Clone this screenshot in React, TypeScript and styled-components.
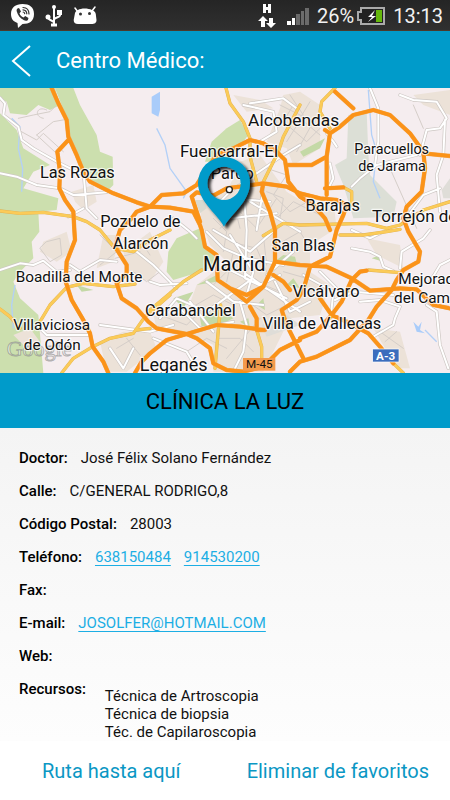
import React from "react";
import styled, { createGlobalStyle } from "styled-components";

const blue = "#009bca";

const GlobalStyle = createGlobalStyle`
  * { box-sizing: border-box; }
  body { margin: 0; background: #fff; }
  body, button { font-family: Roboto, "Noto Sans", sans-serif; }
`;

const Screen = styled.div`
  min-height: 100vh;
  display: flex;
  flex-direction: column;
  color: #111;
`;

const StatusBar = styled.div`
  display: flex;
  align-items: center;
  justify-content: space-between;
  height: 31px;
  padding: 1px 7px 0 10px;
  background: linear-gradient(#252525, #303030);
  border-bottom: 1px solid #4a3a2c;
  color: #f2f2f2;
  font-size: 20px;
`;

const StatusGroup = styled.div<{ $gap: number }>`
  display: flex;
  align-items: center;
  gap: ${(p) => p.$gap}px;
`;

const Level = styled.span`
  display: flex;
  align-items: center;
  gap: 3px;
`;

const Header = styled.header`
  display: flex;
  align-items: center;
  gap: 22px;
  height: 57px;
  padding: 2px 10px 0;
  background: ${blue};
  color: #fff;
`;

const BackButton = styled.button`
  display: flex;
  padding: 0;
  border: 0;
  background: none;
  color: inherit;
`;

const HeaderTitle = styled.h1`
  margin: 0;
  font-size: 22px;
  line-height: 28px;
  font-weight: 400;
`;

const MapArea = styled.svg`
  display: block;
  width: 100%;
  height: 285px;
  background: #f5edef;
`;

const Road = styled.path<{ $kind: "major" | "medium" | "minor" | "track" }>`
  fill: none;
  stroke-linejoin: round;
  stroke-linecap: round;
  stroke: ${(p) => ({ major: "#fb9318", medium: "#fbcb58", minor: "#fff", track: "#d5cec9" })[p.$kind]};
  stroke-width: ${(p) => ({ major: 11, medium: 8, minor: 6, track: 3 })[p.$kind]};
`;

const RoadCasing = styled(Road)`
  stroke: ${(p) => (p.$kind === "major" ? "#f3a650" : p.$kind === "medium" ? "#dfb053" : "#cdc7c3")};
  stroke-width: ${(p) => (p.$kind === "major" ? 13 : 10)};
`;

const Place = styled.text<{ $size: number }>`
  font-family: Roboto, sans-serif;
  font-size: ${(p) => p.$size}px;
  fill: #111;
  stroke: #fff;
  stroke-width: 7px;
  stroke-opacity: 0.75;
  stroke-linejoin: round;
  paint-order: stroke;
`;

const ClinicName = styled.h2`
  display: flex;
  align-items: center;
  justify-content: center;
  height: 55px;
  margin: 0;
  padding-top: 2px;
  background: ${blue};
  color: #000;
  font-size: 22px;
  font-weight: 400;
`;

const Details = styled.dl`
  flex: 1;
  margin: 0;
  padding: 14px 19px 0;
  background: linear-gradient(#f4f4f4, #fdfdfd);
  font-size: 15px;
`;

const Row = styled.div`
  display: flex;
  gap: 13px;
  min-height: 33px;
  line-height: 33px;
`;

const Label = styled.dt`
  font-weight: 500;
  color: #000;
`;

const Value = styled.dd`
  display: flex;
  gap: 13px;
  margin: 0;
`;

const Link = styled.a`
  color: #1caee4;
  text-underline-offset: 3px;
  text-decoration-thickness: 1px;
`;

const Resources = styled.ul`
  margin: 0;
  padding: 14px 0 0 6px;
  list-style: none;
  line-height: 18px;
`;

const Actions = styled.footer`
  display: flex;
  align-items: center;
  justify-content: space-between;
  height: 59px;
  padding: 0 21px 0 42px;
  background: #fff;
`;

const Action = styled.button`
  padding: 0;
  border: 0;
  background: none;
  color: #0b97c4;
  font-size: 20px;
  line-height: 28px;
`;

const terrain: [string, string][] = [
  ["#ccdfae", "M0 9H165L180 60 150 75 115 60 80 90 30 85 20 50 0 40Z"],
  ["#ccdfae", "M0 85L50 135 70 190 150 240 100 260 70 310 175 340 170 375 115 380 118 440 95 470 100 520 60 560 40 590 60 640 115 690 130 864H0Z"],
  ["#ccdfae", "M165 9H220L240 60 290 150 300 200 338 215 340 300 320 320 270 290 205 165 200 100Z"],
  ["#ccdfae", "M615 230L635 170 680 130 720 105 745 150 700 210 670 230Z"],
  ["#ece2d8", "M600 400L610 340 690 300 720 230 780 210 860 320 940 370 1000 350 1010 430 930 480 930 560 990 600 960 690 870 700 790 860 640 860 640 780 560 740 470 730 460 690 560 680 590 600 680 530 630 480Z"],
  ["#ece2d8", "M840 70L850 30 900 20 960 60 960 190 880 240 860 190 800 170Z"],
  ["#ece2d8", "M700 30L780 45 820 70 740 80ZM215 320L280 300 290 350 250 375 225 350ZM130 470L200 440 215 500 170 530 120 500ZM300 770L370 740 450 740 470 790 380 860 320 860ZM1120 730L1200 740 1230 850 1190 850ZM1100 460L1200 480 1210 550 1130 510ZM1240 30L1350 15V90L1270 60Z"],
  ["#ece2d8", "M40 750L90 730 120 770 90 800ZM310 450L360 450 340 530 290 550ZM370 500L450 440 490 530 450 590 390 570Z"],
  ["#ccdfae", "M505 500L530 460 600 430 610 475 640 500 645 540 600 565 570 570 520 585 500 560Z"],
  ["#d9dad0", "M585 345L610 345 620 370 600 385Z"],
  ["#c4d9a6", "M600 700L660 670 700 700 650 725 605 725Z"],
  ["#c4d9a6", "M520 640L580 620 550 670ZM590 600L650 570 650 590ZM830 525L850 510 885 515 890 535ZM860 600L880 580 900 610ZM720 710L745 700 750 730ZM770 660L790 640 795 675ZM1115 520L1140 510 1150 530ZM230 600L280 615 245 620ZM900 200L975 160 960 190 910 215Z"],
  ["#dcdfd6", "M1045 90L1100 80 1105 205 1110 270 1190 350 1180 395 1060 400 1030 300 1005 240 1040 220Z"],
  ["#dfddd8", "M1325 315L1350 280V340L1330 340ZM785 720L860 690 900 720 800 755Z"],
  ["#a9ccfa", "M455 35L480 20V75L475 95 455 85ZM1240 710L1255 725 1265 710 1260 735 1275 745 1250 740Z"],
];

const rivers =
  "M35 100L60 125 55 190 68 250 65 320M45 600L35 660 40 730M470 130L495 180 510 250 560 320 550 340M1105 15L1115 150 1130 200 1120 290 1140 340M1275 735L1310 770";

const tracks =
  "M55 100L100 90 150 80 165 65M110 150L160 110 200 103M55 135L110 165 130 145 190 200M110 150L180 215M140 470L180 460 185 510 150 530 120 490ZM370 470L430 480 450 510M345 520L420 500M640 600L700 540M700 560L840 620M680 820L780 700M1140 740L1210 790M1155 770L1190 740M1240 60L1270 130M1170 250L1250 430M380 760L420 810M350 790L400 760M140 75C110 60 100 95 130 100M880 60L850 110 920 170 960 130M930 50L900 100 960 150M660 430L720 380 770 430 830 340M700 350L720 430M560 800L620 760 680 790M730 640L800 690 860 660M830 480L900 440 930 490M840 60L940 110 890 200M870 30L910 90 860 170M800 250L860 270 820 330 870 380 940 340M830 400L880 350 960 390M800 320L850 340 840 400M640 400L680 440 670 500M690 470L770 490 800 560M700 500L680 590M790 450L800 540M570 670L640 630 700 660M480 690L560 720 600 680M650 760L720 760 760 800M850 560L920 580 900 640M860 660L800 610M400 560L440 590 480 560M300 450L350 500 300 540";

const minor =
  "M0 38L15 55 10 90 55 125 65 165 100 190 170 230 250 270M0 265L50 275 110 300 180 310 220 330 320 322M252 280L260 370 290 400M205 395L250 370M0 555L60 535 100 540 130 527 170 560 210 555M210 540L240 560 300 525 350 530M410 500L460 540 530 610M450 590L480 600 560 595M520 400L570 440 590 460M730 60L820 80 830 140 780 170M750 55L850 40 890 70M640 370L690 320 850 210 900 180M730 310L740 435M790 310L770 435M690 400L830 385M750 350L900 440M700 340L810 350M620 440L670 490 740 520 850 540M640 435L750 500 830 430M690 450L760 560 740 630M740 435L735 580 860 640M680 550L780 600 840 570M735 565L900 680M745 590L620 680 530 640 480 700M620 590L700 650 790 660M570 650L640 740M540 670L600 730 700 710M720 650L740 720 730 800 700 860M800 570L880 500M825 590L870 680 930 650M910 570L1000 620 990 720M960 560L1010 610M1110 9L1135 70 1135 170 1125 240M1200 30L1240 45 1310 50 1340 100 1320 130 1280 135 1260 210M1335 105L1330 210 1310 270 1320 380M1055 305L1080 280 1130 240 1250 210M980 145L1000 170 1010 185M1320 310L1270 330 1225 390 1200 410M990 235L1000 280 985 310M1055 490L1110 500 1140 515 1150 545 1180 558M1055 435L1110 460 1150 440M1200 550L1205 500 1270 460 1290 435M1350 525L1320 540 1290 590M1080 650L1140 645 1200 665 1185 700 1180 720 1120 755M1280 660L1310 680 1320 780 1345 850M1005 645L1060 620 1180 630M110 720L140 750 270 750M330 790L370 850 400 790M300 720L450 740 520 720M460 760L560 800 590 850";

const medium =
  "M0 378L60 385 130 382 220 395 260 410 300 435 345 490 400 500 440 470 510 435M405 597L340 605 250 595 200 607 150 660 120 710M0 672L30 695 60 730M450 675L510 625 550 590 605 555M510 630L435 695 400 745 330 760 278 785 220 820 185 864M450 730L410 735M662 660L655 735 645 850M770 735L785 785 785 835M678 9L690 55 730 110 750 160 750 215 770 290M900 60L850 155 835 200 790 290M1005 9L965 50 960 80 990 130M790 452L850 415 900 420 1100 415 1160 430 1200 420 1270 375 1350 350M1030 307L1055 320 1055 355 1040 375M1020 450L1090 450 1160 440 1200 433M1105 555L1200 563M1180 835L1210 864";

const major =
  "M155 9L175 55 200 105 205 155 230 210 250 260 270 290 340 325 410 352 450 365 485 330 550 325 590 300 615 260 650 210 700 190 750 165 790 175 830 200 855 225 865 290 900 335 940 360 975 400 990 435M450 365L510 368 580 380 600 420 605 435 615 485 650 510 653 585 690 610 740 650 790 605 825 530 825 435 810 380 785 320 790 295M600 410L575 335 590 322 640 332 680 310 790 295 860 305 900 325 960 340 1010 345 1040 360 1030 390 1010 435 995 495 990 515 940 540M205 165L172 200 180 260 178 310 195 345 220 380 223 435 225 465 200 530 197 590 215 645 250 705 270 745 278 785 310 830 325 864M450 365L410 380 395 400 360 435 345 485 380 540 380 565 350 595 365 640 410 670 445 710 470 730 560 747 650 720 720 725 790 735M405 864L425 830 450 805 500 765 560 747M560 747L590 760 630 790 640 835 680 855 730 860 790 845 840 795 900 765M825 530L900 540 980 545 1055 580 1110 617 1200 610 1250 613 1300 660 1350 670M975 135L990 145 1020 125 1060 90 1120 75 1170 90 1230 145 1270 200 1275 250 1265 320 1220 365 1210 400 1225 440 1260 500 1255 530 1210 555 1190 585 1175 615 1130 665 1105 705 1050 765 950 815 900 830 870 860M1270 205L1350 213M1005 20L1060 70M990 145L980 215 935 240 865 240M980 215V330M975 310L1030 307M1100 557L1080 560 1055 585 1025 650 995 690 950 740 900 760M930 545L910 615 890 645 845 675 860 720 880 760 910 820M750 665L770 700 770 735 795 735M820 570L850 590 870 615M960 640L995 690 1050 715 1105 745 1140 785 1180 835M690 610L740 630 790 605";

const places: [string, number, number, number][] = [
  ["Las Rozas", 232, 278, 49],
  ["Alcobendas", 881, 123, 52],
  ["Fuencarral-El", 687, 217, 51],
  ["Pardo", 697, 281, 49],
  ["Paracuellos", 1175, 206, 43],
  ["de Jarama", 1176, 259, 43],
  ["Barajas", 998, 379, 49],
  ["Pozuelo de", 421, 426, 49],
  ["Alarcón", 422, 492, 49],
  ["San Blas", 909, 499, 49],
  ["Madrid", 703, 557, 60],
  ["Boadilla del Monte", 237, 590, 46],
  ["Vicálvaro", 978, 636, 49],
  ["Carabanchel", 571, 693, 49],
  ["Villa de Vallecas", 966, 733, 49],
  ["Villaviciosa", 155, 736, 46],
  ["de Odón", 157, 795, 46],
  ["Leganés", 521, 859, 54],
];

const clippedPlaces: [string, number, number, number][] = [
  ["Torrejón de Ardoz", 1116, 410, 51],
  ["Mejorada", 1195, 596, 46],
  ["del Campo", 1182, 655, 46],
];

function Roads({ d, kind }: { d: string; kind: "major" | "medium" | "minor" }) {
  return (
    <>
      <RoadCasing $kind={kind} d={d} />
      <Road $kind={kind} d={d} />
    </>
  );
}

function MadridMap() {
  return (
    <MapArea viewBox="0 9 1350 855" preserveAspectRatio="xMidYMid slice" role="img" aria-label="Mapa de Madrid">
      <defs>
        <filter id="pinShadow" x="-20%" y="-20%" width="150%" height="150%">
          <feDropShadow dx="9" dy="8" stdDeviation="5" floodColor="#000" floodOpacity="0.85" />
        </filter>
      </defs>
      {terrain.map(([fill, d]) => (
        <path key={d} fill={fill} d={d} />
      ))}
      <path d={rivers} fill="none" stroke="#b3d0f7" strokeWidth="4" />
      <Road $kind="track" d={tracks} />
      <Roads d={minor} kind="minor" />
      <Roads d={medium} kind="medium" />
      <Roads d={major} kind="major" />
      <text x="20" y="813" fontFamily="Liberation Serif, serif" fontSize="66" fill="#fff" fillOpacity="0.5" stroke="#777" strokeOpacity="0.55" strokeWidth="3">
        Google
      </text>
      {places.map(([name, x, y, size]) => (
        <Place key={name} $size={size} x={x} y={y} textAnchor="middle">{name}</Place>
      ))}
      {clippedPlaces.map(([name, x, y, size]) => (
        <Place key={name} $size={size} x={x} y={y}>{name}</Place>
      ))}
      <circle cx="688" cy="314" r="9" fill="#fff" stroke="#222" strokeWidth="4" />
      <rect x="729" y="819" width="97" height="38" fill="#f39a4c" />
      <text x="778" y="850" textAnchor="middle" fontFamily="Roboto, sans-serif" fontSize="35" fill="#111">M-45</text>
      <rect x="1118" y="792" width="79" height="39" fill="#3b6dbd" stroke="#fff" strokeWidth="2" />
      <text x="1157" y="824" textAnchor="middle" fontFamily="Roboto, sans-serif" fontWeight="700" fontSize="35" fill="#fff">A-3</text>
      <path
        filter="url(#pinShadow)"
        fill={blue}
        fillRule="evenodd"
        d="M672 425C660 395 594 350 594 294A78 78 0 0 1 750 294C750 350 686 395 672 425ZM672 245A50 50 0 1 0 672 345A50 50 0 1 0 672 245Z"
      />
    </MapArea>
  );
}

function ViberIcon() {
  return (
    <svg width="25" height="26" viewBox="0 0 25 26" aria-hidden="true">
      <path fill="#fff" d="M12.500 1C5.500 1 1 4.500 1 11c0 4.500 2 7.500 6.500 9l.5 5 4.500-4C19.500 21 24 18 24 11S19.500 1 12.500 1Z" />
      <path fill="#333" d="M7.500 5.500 9 5l2 3.500-1.500 1.700c.6 2 1.900 3.500 4 4.300l1.700-1.500 3.300 2-.6 1.900c-1 1-2.300 1.200-3.900.4-4.100-2.200-6.200-5-7.300-9-.2-1.300 0-2.200.8-2.800Z" />
      <path fill="none" stroke="#333" strokeWidth="1.200" strokeLinecap="round" d="M13 4.500c4 .2 6 2.500 6 6.500M13 6.800c2.500.2 3.700 1.600 3.800 4M13.200 9c.9.100 1.400.6 1.500 1.600" />
    </svg>
  );
}

function UsbIcon() {
  return (
    <svg width="18" height="24" viewBox="0 0 18 24" fill="none" stroke="#fff" strokeWidth="2" aria-hidden="true">
      <path d="M9 3v17M3 13c0 4 6 3 6 6M15 9v2c0 3-6 2-6 5" />
      <circle cx="9" cy="3" r="2" fill="#fff" stroke="none" />
      <circle cx="3" cy="13" r="2.500" fill="#fff" stroke="none" />
      <path d="M12 6h5v5h-5z" fill="#fff" stroke="none" />
      <path d="M6 21h6" strokeWidth="3" />
    </svg>
  );
}

function AndroidIcon() {
  return (
    <svg width="24" height="19" viewBox="0 0 24 19" aria-hidden="true">
      <path fill="none" stroke="#fff" strokeWidth="1.500" strokeLinecap="round" d="m2 2 3 4M22 1l-3 4" />
      <path fill="#fff" d="M5 4c3-2 10-2 14 0 3 1 4 3 4 6l.5 4c0 3-2 4-5 4H5c-3 0-4.300-1.500-4.300-4L2 7c.5-1.500 1.500-2.500 3-3Z" />
      <circle cx="7.500" cy="8" r="1.500" fill="#333" />
      <circle cx="16.500" cy="7.500" r="1.500" fill="#333" />
    </svg>
  );
}

function DataIcon() {
  return (
    <svg width="18" height="26" viewBox="0 0 18 26" fill="#fff" aria-hidden="true">
      <path d="M5 1h3v3h2V1h3v9h-3V7H8v3H5ZM5 13l5 5H7v6H3v-6H0ZM11 15h4v5h3l-5 5-5-5h3Z" />
    </svg>
  );
}

function SignalIcon() {
  return (
    <svg width="22" height="18" viewBox="0 0 22 18" aria-hidden="true">
      <path fill="#fff" d="M0 14h4v4H0ZM5 11h3v7H5Z" />
      <path fill="#6b6b6b" d="M9 7h4v11H9ZM14 4h3v14h-3ZM18 1h4v17h-4Z" />
    </svg>
  );
}

function BatteryIcon() {
  return (
    <svg width="28" height="18" viewBox="0 0 28 18" aria-hidden="true">
      <path fill="#222" stroke="#aaa" strokeWidth="2" d="M4 1h23v16H4v-4H1V5h3Z" />
      <path fill="#65b80c" d="M19 3h6v12h-6Z" />
      <path fill="#fff" d="m18 3-7 7h4l-4 5 8-6h-4Z" />
    </svg>
  );
}

export default function App() {
  return (
    <>
      <GlobalStyle />
      <Screen>
        <StatusBar>
          <StatusGroup $gap={10}>
            <ViberIcon />
            <UsbIcon />
            <AndroidIcon />
          </StatusGroup>
          <StatusGroup $gap={8}>
            <StatusGroup $gap={11}>
              <DataIcon />
              <SignalIcon />
            </StatusGroup>
            <Level>26%<BatteryIcon /></Level>
            <span>13:13</span>
          </StatusGroup>
        </StatusBar>
        <Header>
          <BackButton aria-label="Volver">
            <svg width="24" height="34" viewBox="0 0 24 34" fill="none" stroke="currentColor" strokeWidth="2">
              <path d="M20 2 3 17l17 15" />
            </svg>
          </BackButton>
          <HeaderTitle>Centro Médico:</HeaderTitle>
        </Header>
        <MadridMap />
        <ClinicName>CLÍNICA LA LUZ</ClinicName>
        <Details>
          <Row><Label>Doctor:</Label><Value>José Félix Solano Fernández</Value></Row>
          <Row><Label>Calle:</Label><Value>C/GENERAL RODRIGO,8</Value></Row>
          <Row><Label>Código Postal:</Label><Value>28003</Value></Row>
          <Row>
            <Label>Teléfono:</Label>
            <Value>
              <Link href="tel:638150484">638150484</Link>
              <Link href="tel:914530200">914530200</Link>
            </Value>
          </Row>
          <Row><Label>Fax:</Label><Value /></Row>
          <Row>
            <Label>E-mail:</Label>
            <Value><Link href="mailto:JOSOLFER@HOTMAIL.COM">JOSOLFER@HOTMAIL.COM</Link></Value>
          </Row>
          <Row><Label>Web:</Label><Value /></Row>
          <Row>
            <Label>Recursos:</Label>
            <Value>
              <Resources>
                <li>Técnica de Artroscopia</li>
                <li>Técnica de biopsia</li>
                <li>Téc. de Capilaroscopia</li>
              </Resources>
            </Value>
          </Row>
        </Details>
        <Actions>
          <Action>Ruta hasta aquí</Action>
          <Action>Eliminar de favoritos</Action>
        </Actions>
      </Screen>
    </>
  );
}
